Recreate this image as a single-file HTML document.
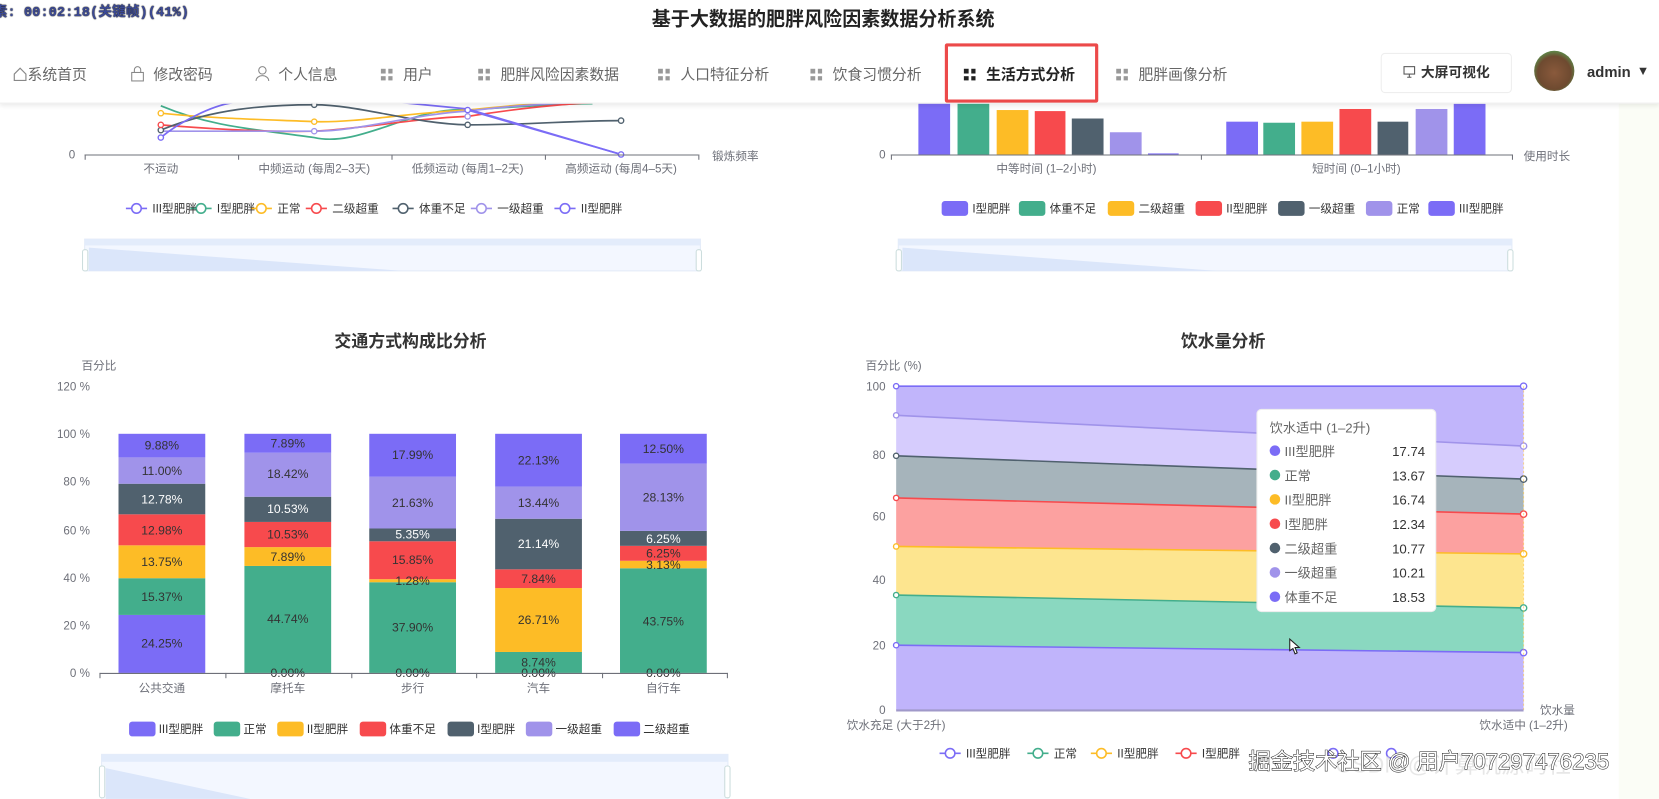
<!DOCTYPE html>
<html><head><meta charset="utf-8"><style>
html,body{margin:0;padding:0;background:#fff;width:1659px;height:798px;overflow:hidden;font-family:"Liberation Sans","Noto Sans CJK SC",sans-serif;}
#wrap{position:absolute;left:0;top:0;width:1568px;height:755px;transform:scale(1.05804);transform-origin:0 0;}
.abs{position:absolute;}
.nav{position:absolute;top:60px;font-size:14px;color:#666;white-space:nowrap;}
.grid{display:inline-block;width:11px;height:11px;vertical-align:-1px;margin-right:10px;background:
linear-gradient(#999,#999) 0 0/4.5px 4.5px no-repeat,linear-gradient(#999,#999) 6.5px 0/4.5px 4.5px no-repeat,linear-gradient(#999,#999) 0 6.5px/4.5px 4.5px no-repeat,linear-gradient(#999,#999) 6.5px 6.5px/4.5px 4.5px no-repeat;}
.grid.b{background:
linear-gradient(#222,#222) 0 0/4.5px 4.5px no-repeat,linear-gradient(#222,#222) 6.5px 0/4.5px 4.5px no-repeat,linear-gradient(#222,#222) 0 6.5px/4.5px 4.5px no-repeat,linear-gradient(#222,#222) 6.5px 6.5px/4.5px 4.5px no-repeat;}
</style></head><body><div id="wrap">

<svg class="abs" style="left:0;top:0" width="1568" height="755" font-family="Liberation Sans, Noto Sans CJK SC, sans-serif">
<rect x="1530" y="97" width="40" height="660" fill="#fbfdf6"/>
<g fill="none" stroke-width="1.6">
<path d="M152 100 C200 120,240 122,297 130 C340 140,390 100,442 104 C500 100,540 98,560 98" stroke="#43ae8c"/>
<path d="M152 107 C200 112,250 113,297 115 C340 116,390 106,442 104 C480 100,520 97,540 97" stroke="#fdbc26"/>
<path d="M152 118 C200 122,250 125,297 124 C340 122,390 112,442 110 C480 104,520 99,560 97" stroke="#f74a4d"/>
<path d="M152 123 C200 103,250 99,297 99 C340 99,390 117,442 118 C500 118,540 114,587 114" stroke="#50616e"/>
<path d="M152 124 C200 124,250 124,297 124 C340 124,390 108,442 105 C480 100,520 98,540 97" stroke="#a093ea"/>
<path d="M152 130 C170 115,200 100,220 97" stroke="#7b6cf6"/>
<path d="M380 97 L442 103 L587 146" stroke="#7b6cf6"/>
<path d="M442 104 L587 146" stroke="#7b6cf6"/>
</g>
<g fill="#fff" stroke-width="1.3">
<circle cx="152" cy="130" r="2.5" stroke="#7b6cf6"/><circle cx="152" cy="123" r="2.5" stroke="#50616e"/><circle cx="152" cy="118" r="2.5" stroke="#f74a4d"/><circle cx="152" cy="107" r="2.5" stroke="#fdbc26"/>
<circle cx="297" cy="99" r="2.5" stroke="#50616e"/><circle cx="297" cy="115" r="2.5" stroke="#fdbc26"/><circle cx="297" cy="124" r="2.5" stroke="#a093ea"/>
<circle cx="442" cy="118" r="2.5" stroke="#50616e"/><circle cx="442" cy="104" r="2.5" stroke="#7b6cf6"/><circle cx="442" cy="110" r="2.5" stroke="#a093ea"/>
<circle cx="587" cy="114" r="2.5" stroke="#50616e"/><circle cx="587" cy="146" r="2.5" stroke="#7b6cf6"/>
</g>
<g stroke="#6e7079" stroke-width="1"><line x1="80" y1="146.5" x2="660" y2="146.5"/>
<line x1="80.5" y1="146" x2="80.5" y2="151"/><line x1="225.5" y1="146" x2="225.5" y2="151"/><line x1="370.5" y1="146" x2="370.5" y2="151"/><line x1="515.5" y1="146" x2="515.5" y2="151"/><line x1="660.5" y1="146" x2="660.5" y2="151"/></g>
<g font-size="11" fill="#6e7079" text-anchor="middle">
<text x="68" y="150">0</text><text x="152" y="163">不运动</text><text x="297" y="163">中频运动 (每周2–3天)</text><text x="442" y="163">低频运动 (每周1–2天)</text><text x="587" y="163">高频运动 (每周4–5天)</text><text x="695" y="151">锻炼频率</text>
</g>
<g font-size="11" fill="#333">
<g stroke-width="1.5" fill="#fff">
<line x1="119" y1="197" x2="139" y2="197" stroke="#7b6cf6"/><circle cx="129" cy="197" r="4.5" stroke="#7b6cf6"/>
<line x1="180" y1="197" x2="200" y2="197" stroke="#43ae8c"/><circle cx="190" cy="197" r="4.5" stroke="#43ae8c"/>
<line x1="237" y1="197" x2="257" y2="197" stroke="#fdbc26"/><circle cx="247" cy="197" r="4.5" stroke="#fdbc26"/>
<line x1="289" y1="197" x2="309" y2="197" stroke="#f74a4d"/><circle cx="299" cy="197" r="4.5" stroke="#f74a4d"/>
<line x1="371" y1="197" x2="391" y2="197" stroke="#50616e"/><circle cx="381" cy="197" r="4.5" stroke="#50616e"/>
<line x1="445" y1="197" x2="465" y2="197" stroke="#a093ea"/><circle cx="455" cy="197" r="4.5" stroke="#a093ea"/>
<line x1="524" y1="197" x2="544" y2="197" stroke="#7b6cf6"/><circle cx="534" cy="197" r="4.5" stroke="#7b6cf6"/>
</g>
<text x="144" y="201">III型肥胖</text><text x="205" y="201">I型肥胖</text><text x="262" y="201">正常</text><text x="314" y="201">二级超重</text><text x="396" y="201">体重不足</text><text x="470" y="201">一级超重</text><text x="549" y="201">II型肥胖</text>
</g>
<rect x="80" y="226" width="582" height="30" fill="#f3f7ff" stroke="#e4ebf8"/>
<rect x="80" y="226" width="582" height="6" fill="#e3ecfb"/>
<path d="M84 234 L380 256 L84 256Z" fill="#dbe6fa"/>
<rect x="78" y="236" width="5" height="20" rx="2" fill="#fff" stroke="#cdd"/><rect x="658" y="236" width="5" height="20" rx="2" fill="#fff" stroke="#cdd"/>

<g>
<rect x="868" y="97" width="30" height="49" fill="#7b6cf6"/><rect x="905" y="97" width="30" height="49" fill="#43ae8c"/>
<rect x="942" y="104" width="30" height="42" fill="#fdbc26"/><rect x="978" y="105" width="29" height="41" fill="#f74a4d"/>
<rect x="1013" y="112" width="30" height="34" fill="#50616e"/><rect x="1049" y="125" width="30" height="21" fill="#a093ea"/>
<rect x="1085" y="145" width="29" height="1" fill="#7b6cf6"/>
<rect x="1159" y="115" width="30" height="31" fill="#7b6cf6"/><rect x="1194" y="116" width="30" height="30" fill="#43ae8c"/>
<rect x="1230" y="115" width="30" height="31" fill="#fdbc26"/><rect x="1266" y="103" width="30" height="43" fill="#f74a4d"/>
<rect x="1302" y="115" width="29" height="31" fill="#50616e"/><rect x="1338" y="103" width="30" height="43" fill="#a093ea"/>
<rect x="1374" y="98" width="30" height="48" fill="#7b6cf6"/>
</g>
<g stroke="#6e7079"><line x1="842" y1="146.5" x2="1430" y2="146.5"/><line x1="1135.5" y1="146" x2="1135.5" y2="151"/><line x1="842.5" y1="146" x2="842.5" y2="151"/><line x1="1429.5" y1="146" x2="1429.5" y2="151"/></g>
<g font-size="11" fill="#6e7079" text-anchor="middle"><text x="834" y="150">0</text><text x="989" y="163">中等时间 (1–2小时)</text><text x="1282" y="163">短时间 (0–1小时)</text><text x="1462" y="151">使用时长</text></g>
<g font-size="11" fill="#333">
<rect x="890" y="190" width="25" height="14" rx="3" fill="#7b6cf6"/><text x="919" y="201">I型肥胖</text>
<rect x="963" y="190" width="25" height="14" rx="3" fill="#43ae8c"/><text x="992" y="201">体重不足</text>
<rect x="1047" y="190" width="25" height="14" rx="3" fill="#fdbc26"/><text x="1076" y="201">二级超重</text>
<rect x="1130" y="190" width="25" height="14" rx="3" fill="#f74a4d"/><text x="1159" y="201">II型肥胖</text>
<rect x="1208" y="190" width="25" height="14" rx="3" fill="#50616e"/><text x="1237" y="201">一级超重</text>
<rect x="1291" y="190" width="25" height="14" rx="3" fill="#a093ea"/><text x="1320" y="201">正常</text>
<rect x="1350" y="190" width="25" height="14" rx="3" fill="#7b6cf6"/><text x="1379" y="201">III型肥胖</text>
</g>
<rect x="849" y="226" width="580" height="30" fill="#f3f7ff" stroke="#e4ebf8"/>
<rect x="849" y="226" width="580" height="6" fill="#e3ecfb"/>
<path d="M853 234 L1150 256 L853 256Z" fill="#dbe6fa"/>
<rect x="847" y="236" width="5" height="20" rx="2" fill="#fff" stroke="#cdd"/><rect x="1425" y="236" width="5" height="20" rx="2" fill="#fff" stroke="#cdd"/>

<text x="388" y="328" font-size="16" font-weight="bold" fill="#333" text-anchor="middle">交通方式构成比分析</text>
<text x="77" y="349" font-size="11" fill="#6e7079">百分比</text>
<g font-size="11" fill="#6e7079" text-anchor="end">
<text x="85" y="369">120 %</text><text x="85" y="414">100 %</text><text x="85" y="459">80 %</text><text x="85" y="505">60 %</text><text x="85" y="550">40 %</text><text x="85" y="595">20 %</text><text x="85" y="640">0 %</text>
</g>
<g>
<rect x="112" y="581.2" width="82" height="54.8" fill="#7b6cf6"/><rect x="112" y="546.5" width="82" height="34.7" fill="#43ae8c"/>
<rect x="112" y="515.4" width="82" height="31.1" fill="#fdbc26"/><rect x="112" y="486.1" width="82" height="29.3" fill="#f74a4d"/>
<rect x="112" y="457.2" width="82" height="28.9" fill="#50616e"/><rect x="112" y="432.3" width="82" height="24.9" fill="#a093ea"/>
<rect x="112" y="410" width="82" height="22.3" fill="#7b6cf6"/>
<rect x="231" y="534.9" width="82" height="101.1" fill="#43ae8c"/><rect x="231" y="517.1" width="82" height="17.8" fill="#fdbc26"/>
<rect x="231" y="493.3" width="82" height="23.8" fill="#f74a4d"/><rect x="231" y="469.5" width="82" height="23.8" fill="#50616e"/>
<rect x="231" y="427.9" width="82" height="41.6" fill="#a093ea"/><rect x="231" y="410" width="82" height="17.9" fill="#7b6cf6"/>
<rect x="349" y="550.3" width="82" height="85.7" fill="#43ae8c"/><rect x="349" y="547.4" width="82" height="2.9" fill="#fdbc26"/>
<rect x="349" y="511.6" width="82" height="35.8" fill="#f74a4d"/><rect x="349" y="499.5" width="82" height="12.1" fill="#50616e"/>
<rect x="349" y="450.6" width="82" height="48.9" fill="#a093ea"/><rect x="349" y="410" width="82" height="40.6" fill="#7b6cf6"/>
<rect x="468" y="616.2" width="82" height="19.8" fill="#43ae8c"/><rect x="468" y="555.8" width="82" height="60.4" fill="#fdbc26"/>
<rect x="468" y="538.1" width="82" height="17.7" fill="#f74a4d"/><rect x="468" y="490.3" width="82" height="47.8" fill="#50616e"/>
<rect x="468" y="459.9" width="82" height="30.4" fill="#a093ea"/><rect x="468" y="410" width="82" height="49.9" fill="#7b6cf6"/>
<rect x="586" y="537.1" width="82" height="98.9" fill="#43ae8c"/><rect x="586" y="530" width="82" height="7.1" fill="#fdbc26"/>
<rect x="586" y="515.9" width="82" height="14.1" fill="#f74a4d"/><rect x="586" y="501.8" width="82" height="14.1" fill="#50616e"/>
<rect x="586" y="438.2" width="82" height="63.6" fill="#a093ea"/><rect x="586" y="410" width="82" height="28.2" fill="#7b6cf6"/>
</g>
<g font-size="11.5" fill="#333" text-anchor="middle">
<text x="153" y="612">24.25%</text><text x="153" y="568">15.37%</text><text x="153" y="535">13.75%</text><text x="153" y="505">12.98%</text><text x="153" y="476" fill="#fff">12.78%</text><text x="153" y="449">11.00%</text><text x="153" y="425">9.88%</text>
<text x="272" y="589">44.74%</text><text x="272" y="530">7.89%</text><text x="272" y="509">10.53%</text><text x="272" y="485" fill="#fff">10.53%</text><text x="272" y="452">18.42%</text><text x="272" y="423">7.89%</text><text x="272" y="640">0.00%</text>
<text x="390" y="597">37.90%</text><text x="390" y="553">1.28%</text><text x="390" y="533">15.85%</text><text x="390" y="509" fill="#fff">5.35%</text><text x="390" y="479">21.63%</text><text x="390" y="434">17.99%</text><text x="390" y="640">0.00%</text>
<text x="509" y="630">8.74%</text><text x="509" y="590">26.71%</text><text x="509" y="551">7.84%</text><text x="509" y="518" fill="#fff">21.14%</text><text x="509" y="479">13.44%</text><text x="509" y="439">22.13%</text><text x="509" y="640">0.00%</text>
<text x="627" y="591">43.75%</text><text x="627" y="538">3.13%</text><text x="627" y="527">6.25%</text><text x="627" y="513" fill="#fff">6.25%</text><text x="627" y="474">28.13%</text><text x="627" y="428">12.50%</text><text x="627" y="640">0.00%</text>
</g>
<g stroke="#6e7079"><line x1="94" y1="636.5" x2="688" y2="636.5"/><line x1="94.5" y1="636" x2="94.5" y2="641"/><line x1="213.5" y1="636" x2="213.5" y2="641"/><line x1="332.5" y1="636" x2="332.5" y2="641"/><line x1="450.5" y1="636" x2="450.5" y2="641"/><line x1="569.5" y1="636" x2="569.5" y2="641"/><line x1="687.5" y1="636" x2="687.5" y2="641"/></g>
<g font-size="11" fill="#6e7079" text-anchor="middle"><text x="153" y="654">公共交通</text><text x="272" y="654">摩托车</text><text x="390" y="654">步行</text><text x="509" y="654">汽车</text><text x="627" y="654">自行车</text></g>
<g font-size="11" fill="#333">
<rect x="122" y="682" width="25" height="14" rx="3" fill="#7b6cf6"/><text x="150" y="693">III型肥胖</text>
<rect x="202" y="682" width="25" height="14" rx="3" fill="#43ae8c"/><text x="230" y="693">正常</text>
<rect x="262" y="682" width="25" height="14" rx="3" fill="#fdbc26"/><text x="290" y="693">II型肥胖</text>
<rect x="340" y="682" width="25" height="14" rx="3" fill="#f74a4d"/><text x="368" y="693">体重不足</text>
<rect x="423" y="682" width="25" height="14" rx="3" fill="#50616e"/><text x="451" y="693">I型肥胖</text>
<rect x="497" y="682" width="25" height="14" rx="3" fill="#a093ea"/><text x="525" y="693">一级超重</text>
<rect x="580" y="682" width="25" height="14" rx="3" fill="#7b6cf6"/><text x="608" y="693">二级超重</text>
</g>
<rect x="96" y="713" width="592" height="45" fill="#f3f7ff" stroke="#e4ebf8"/>
<rect x="96" y="713" width="592" height="7" fill="#e3ecfb"/>
<path d="M100 726 L250 758 L100 758Z" fill="#dbe6fa"/>
<rect x="94" y="724" width="5" height="30" rx="2" fill="#fff" stroke="#cdd"/><rect x="685" y="724" width="5" height="30" rx="2" fill="#fff" stroke="#cdd"/>

<text x="1156" y="328" font-size="16" font-weight="bold" fill="#333" text-anchor="middle">饮水量分析</text>
<text x="818" y="349" font-size="11" fill="#6e7079">百分比 (%)</text>
<g font-size="11" fill="#6e7079" text-anchor="end">
<text x="837" y="369">100</text><text x="837" y="434">80</text><text x="837" y="492">60</text><text x="837" y="552">40</text><text x="837" y="614">20</text><text x="837" y="675">0</text>
</g>
<path d="M847 365 L1440 365 L1440 421.6 L847 392.5Z" fill="#c1b5fb"/>
<path d="M847 392.5 L1440 421.6 L1440 452.8 L847 430.8Z" fill="#d6ccfd"/>
<path d="M847 430.8 L1440 452.8 L1440 485.9 L847 470.6Z" fill="#a6b4bb"/>
<path d="M847 470.6 L1440 485.9 L1440 523.5 L847 516.5Z" fill="#fca1a0"/>
<path d="M847 516.5 L1440 523.5 L1440 574.6 L847 562.4Z" fill="#fde58f"/>
<path d="M847 562.4 L1440 574.6 L1440 616.8 L847 609.8Z" fill="#8ad8c0"/>
<path d="M847 609.8 L1440 616.8 L1440 671 L847 671Z" fill="#c0b4fb"/>
<g fill="none" stroke-width="1.5">
<line x1="847" y1="365" x2="1440" y2="365" stroke="#7b6cf6"/>
<line x1="847" y1="392.5" x2="1440" y2="421.6" stroke="#a093ea"/>
<line x1="847" y1="430.8" x2="1440" y2="452.8" stroke="#50616e"/>
<line x1="847" y1="470.6" x2="1440" y2="485.9" stroke="#f74a4d"/>
<line x1="847" y1="516.5" x2="1440" y2="523.5" stroke="#fdbc26"/>
<line x1="847" y1="562.4" x2="1440" y2="574.6" stroke="#43ae8c"/>
<line x1="847" y1="609.8" x2="1440" y2="616.8" stroke="#7b6cf6"/>
</g>
<g fill="#fff" stroke-width="1.3">
<circle cx="847" cy="365" r="2.5" stroke="#7b6cf6"/><circle cx="847" cy="392.5" r="2.5" stroke="#a093ea"/><circle cx="847" cy="430.8" r="2.5" stroke="#50616e"/><circle cx="847" cy="470.6" r="2.5" stroke="#f74a4d"/><circle cx="847" cy="516.5" r="2.5" stroke="#fdbc26"/><circle cx="847" cy="562.4" r="2.5" stroke="#43ae8c"/><circle cx="847" cy="609.8" r="2.5" stroke="#7b6cf6"/>
<circle cx="1440" cy="365" r="3" stroke="#7b6cf6"/><circle cx="1440" cy="421.6" r="3" stroke="#a093ea"/><circle cx="1440" cy="452.8" r="3" stroke="#50616e"/><circle cx="1440" cy="485.9" r="3" stroke="#f74a4d"/><circle cx="1440" cy="523.5" r="3" stroke="#fdbc26"/><circle cx="1440" cy="574.6" r="3" stroke="#43ae8c"/><circle cx="1440" cy="616.8" r="3" stroke="#7b6cf6"/>
</g>
<line x1="1440" y1="365" x2="1440" y2="671" stroke="#fdbc26" stroke-dasharray="2,2" opacity="0.5"/>
<line x1="847" y1="671.5" x2="1440" y2="671.5" stroke="#a099c9" stroke-width="2"/>
<g font-size="11" fill="#6e7079" text-anchor="middle"><text x="847" y="689">饮水充足 (大于2升)</text><text x="1440" y="689">饮水适中 (1–2升)</text><text x="1472" y="675">饮水量</text></g>
<rect x="1188" y="387" width="169" height="191" rx="4" fill="#fff" stroke="#eee"/>
<g font-size="12.5" fill="#666">
<text x="1200" y="409">饮水适中 (1–2升)</text>
<circle cx="1205" cy="426" r="5" fill="#7b6cf6"/><text x="1214" y="431">III型肥胖</text><text x="1347" y="431" text-anchor="end" fill="#333">17.74</text>
<circle cx="1205" cy="449" r="5" fill="#43ae8c"/><text x="1214" y="454">正常</text><text x="1347" y="454" text-anchor="end" fill="#333">13.67</text>
<circle cx="1205" cy="472" r="5" fill="#fdbc26"/><text x="1214" y="477">II型肥胖</text><text x="1347" y="477" text-anchor="end" fill="#333">16.74</text>
<circle cx="1205" cy="495" r="5" fill="#f74a4d"/><text x="1214" y="500">I型肥胖</text><text x="1347" y="500" text-anchor="end" fill="#333">12.34</text>
<circle cx="1205" cy="518" r="5" fill="#50616e"/><text x="1214" y="523">二级超重</text><text x="1347" y="523" text-anchor="end" fill="#333">10.77</text>
<circle cx="1205" cy="541" r="5" fill="#a093ea"/><text x="1214" y="546">一级超重</text><text x="1347" y="546" text-anchor="end" fill="#333">10.21</text>
<circle cx="1205" cy="564" r="5" fill="#7b6cf6"/><text x="1214" y="569">体重不足</text><text x="1347" y="569" text-anchor="end" fill="#333">18.53</text>
</g>
<path d="M1219 604 l0 11 l3 -2 l2 5 l2 -1 l-2 -5 l4 0z" fill="#fff" stroke="#222"/>
<g font-size="11" fill="#333">
<g stroke-width="1.5" fill="#fff">
<line x1="888" y1="712" x2="908" y2="712" stroke="#7b6cf6"/><circle cx="898" cy="712" r="4.5" stroke="#7b6cf6"/>
<line x1="971" y1="712" x2="991" y2="712" stroke="#43ae8c"/><circle cx="981" cy="712" r="4.5" stroke="#43ae8c"/>
<line x1="1031" y1="712" x2="1051" y2="712" stroke="#fdbc26"/><circle cx="1041" cy="712" r="4.5" stroke="#fdbc26"/>
<line x1="1111" y1="712" x2="1131" y2="712" stroke="#f74a4d"/><circle cx="1121" cy="712" r="4.5" stroke="#f74a4d"/>
<circle cx="1260" cy="712" r="4.5" stroke="#7b6cf6"/><circle cx="1315" cy="712" r="4.5" stroke="#7b6cf6"/>
</g>
<text x="913" y="716">III型肥胖</text><text x="996" y="716">正常</text><text x="1056" y="716">II型肥胖</text><text x="1136" y="716">I型肥胖</text>
</g>
<text x="1262" y="730" font-size="22" fill="#d8d8d8" opacity="0.6">CSDN @计算机源码社</text>
<text x="1180" y="727" font-size="21" fill="#fff" stroke="#111" stroke-width="0.9" paint-order="stroke">掘金技术社区 @ 用户707297476235</text>
</svg>

<div class="abs" style="left:0;top:0;width:1568px;height:97px;background:#fff;box-shadow:0 2px 4px rgba(0,0,0,0.08);border-bottom:1px solid #eee;"></div>
<div class="abs" style="left:-6px;top:0;font-size:13px;font-weight:bold;color:#3c4a96;text-shadow:0 0 1px #000,0 0 1px #000;font-family:'Liberation Mono','Noto Sans CJK SC',monospace;">素: 00:02:18(关键帧)(41%)</div>
<div class="abs" style="left:0;width:1556px;top:4px;text-align:center;font-size:18px;font-weight:bold;color:#222;">基于大数据的肥胖风险因素数据分析系统</div>

<div class="nav" style="left:12px;"><svg width="14" height="14" viewBox="0 0 14 14" style="vertical-align:-2px"><path d="M1.5 7 L7 1.5 L12.5 7 V13 H1.5Z" fill="none" stroke="#888" stroke-width="1.1"/></svg>系统首页</div>
<div class="nav" style="left:123px;"><svg width="14" height="15" viewBox="0 0 14 15" style="vertical-align:-2px;margin-right:8px"><rect x="1.5" y="6.5" width="11" height="8" fill="none" stroke="#888"/><path d="M4 6.5 V4 a3 3 0 0 1 6 0 V6.5" fill="none" stroke="#888"/></svg>修改密码</div>
<div class="nav" style="left:241px;"><svg width="14" height="15" viewBox="0 0 14 15" style="vertical-align:-2px;margin-right:8px"><circle cx="7" cy="4.5" r="3.5" fill="none" stroke="#888"/><path d="M1 14.5 a6 5 0 0 1 12 0" fill="none" stroke="#888"/></svg>个人信息</div>
<div class="nav" style="left:360px;"><span class="grid"></span>用户</div>
<div class="nav" style="left:452px;"><span class="grid"></span>肥胖风险因素数据</div>
<div class="nav" style="left:622px;"><span class="grid"></span>人口特征分析</div>
<div class="nav" style="left:766px;"><span class="grid"></span>饮食习惯分析</div>
<div class="nav" style="left:911px;color:#222;font-weight:bold;"><span class="grid b"></span>生活方式分析</div>
<div class="nav" style="left:1055px;"><span class="grid"></span>肥胖画像分析</div>
<div class="abs" style="left:893px;top:41px;width:139px;height:50px;border:3px solid #ec4a4a;border-radius:2px;"></div>
<div class="abs" style="left:1305px;top:50px;width:122px;height:36px;border:1px solid #eee;border-radius:4px;background:#fff;font-size:13px;font-weight:bold;color:#333;line-height:36px;text-align:center;"><svg width="12" height="12" viewBox="0 0 12 12" style="vertical-align:-1px;margin-right:5px"><rect x="1" y="1" width="10" height="7" fill="none" stroke="#555"/><path d="M6 8 V11 M4 11 H8" stroke="#555"/></svg>大屏可视化</div>
<div class="abs" style="left:1450px;top:48px;width:38px;height:38px;border-radius:50%;background:radial-gradient(circle at 50% 55%,#8a5a3c 0,#6e4a30 55%,#5c8b4a 75%,#4f9a45 100%);"></div>
<div class="abs" style="left:1500px;top:60px;font-size:14px;font-weight:bold;color:#333;">admin</div>
<div class="abs" style="left:1547px;top:60px;font-size:12px;color:#333;">▼</div>
</div></body></html>
